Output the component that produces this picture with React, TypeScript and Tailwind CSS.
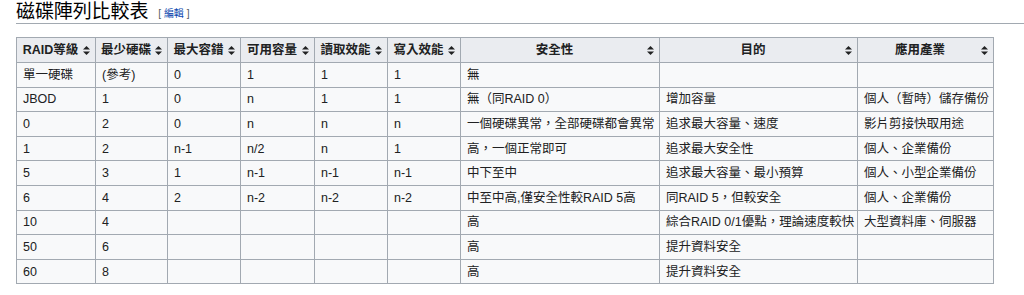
import React from "react";

const cols = [79, 72, 73, 74, 73, 73, 199, 198, 136];
const headers = ["RAID等級", "最少硬碟", "最大容錯", "可用容量", "讀取效能", "寫入效能", "安全性", "目的", "應用產業"];
const rows: string[][] = [
  ["單一硬碟", "(參考)", "0", "1", "1", "1", "無", "", ""],
  ["JBOD", "1", "0", "n", "1", "1", "無（同RAID 0）", "增加容量", "個人（暫時）儲存備份"],
  ["0", "2", "0", "n", "n", "n", "一個硬碟異常，全部硬碟都會異常", "追求最大容量、速度", "影片剪接快取用途"],
  ["1", "2", "n-1", "n/2", "n", "1", "高，一個正常即可", "追求最大安全性", "個人、企業備份"],
  ["5", "3", "1", "n-1", "n-1", "n-1", "中下至中", "追求最大容量、最小預算", "個人、小型企業備份"],
  ["6", "4", "2", "n-2", "n-2", "n-2", "中至中高,僅安全性較RAID 5高", "同RAID 5，但較安全", "個人、企業備份"],
  ["10", "4", "", "", "", "", "高", "綜合RAID 0/1優點，理論速度較快", "大型資料庫、伺服器"],
  ["50", "6", "", "", "", "", "高", "提升資料安全", ""],
  ["60", "8", "", "", "", "", "高", "提升資料安全", ""],
];

function SortIcon() {
  return (
    <svg width="7" height="9" viewBox="0 0 7 9" className="flex-none">
      <path d="M3.5 0 L7 3.6 H0 Z" fill="#202122" />
      <path d="M0 5.4 H7 L3.5 9 Z" fill="#202122" />
    </svg>
  );
}

export default function App() {
  return (
    <div className="bg-white w-[1024px] h-[295px] overflow-hidden font-['Liberation_Sans','Noto_Sans_CJK_TC',sans-serif] text-[#202122]">
      <div className="pl-[16px] pt-[2px]">
        <div className="flex items-end border-b border-[#a2a9b1] h-[22px]">
          <span className="text-[19px] leading-[22px] font-normal text-black tracking-[-0.1px]">磁碟陣列比較表</span>
          <span className="ml-[10px] text-[10px] leading-[18px] text-[#54595d]">
            [ <span className="text-[#0645ad]">編輯</span> ]
          </span>
        </div>
        <table className="mt-[13px] border-collapse table-fixed text-[12.5px] bg-[#f8f9fa] border border-[#a2a9b1]" style={{ width: 977 }}>
          <colgroup>
            {cols.map((w, i) => (
              <col key={i} style={{ width: w }} />
            ))}
          </colgroup>
          <thead>
            <tr>
              {headers.map((h, i) => (
                <th key={i} className="border border-[#a2a9b1] bg-[#eaecf0] font-bold h-[25px] pl-[5px] pr-[5px] p-0">
                  <div className="flex items-center">
                    <span className="flex-1 text-center whitespace-nowrap leading-[18px]">{h}</span>
                    <span className="ml-[4px] flex"><SortIcon /></span>
                  </div>
                </th>
              ))}
            </tr>
          </thead>
          <tbody>
            {rows.map((r, ri) => (
              <tr key={ri}>
                {r.map((c, ci) => (
                  <td key={ci} className="border border-[#a2a9b1] h-[24.6px] px-[6px] py-0 whitespace-nowrap leading-[18px] text-left">
                    {c}
                  </td>
                ))}
              </tr>
            ))}
          </tbody>
        </table>
      </div>
    </div>
  );
}
